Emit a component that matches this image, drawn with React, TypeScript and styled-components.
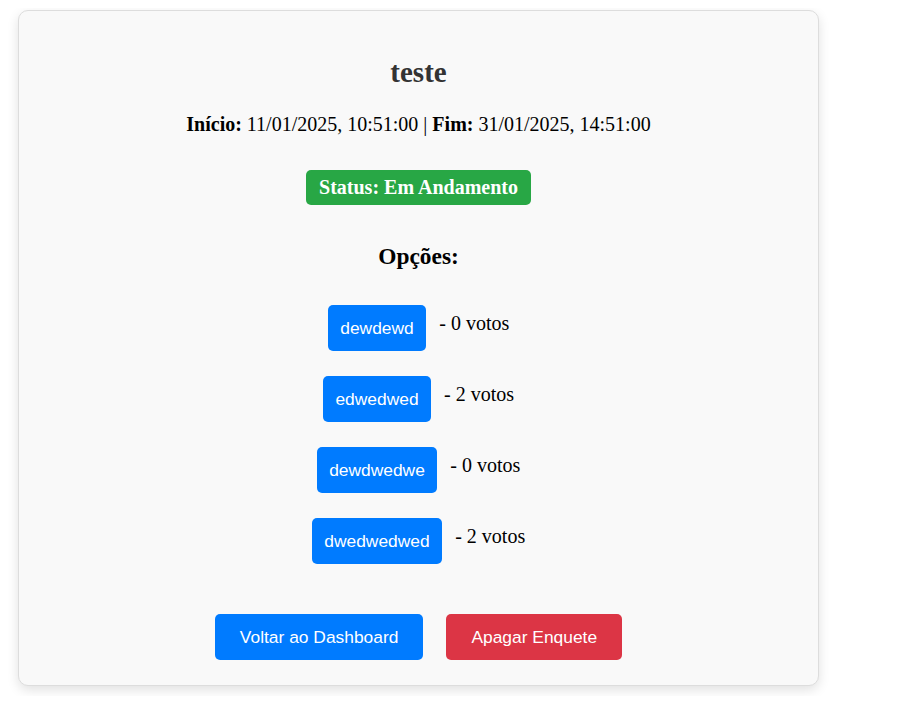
import styled, { createGlobalStyle } from "styled-components";

const GlobalStyle = createGlobalStyle`
  body {
    margin: 8px;
    background: #ffffff;
    font-family: "Liberation Serif", "Times New Roman", serif;
    color: #000;
  }
`;

const Card = styled.div`
  box-sizing: border-box;
  width: 801px;
  margin: 2px 10px 10px;
  padding: 25px 25px 25px;
  background: #f9f9f9;
  border: 1px solid #ddd;
  border-radius: 10px;
  box-shadow: 0 4px 12px rgba(0, 0, 0, 0.12);
  display: flex;
  flex-direction: column;
  align-items: center;
`;

const Title = styled.h2`
  margin: 20px 0 0;
  font-size: 29px;
  line-height: 33px;
  font-weight: bold;
  color: #333;
`;

const Dates = styled.p`
  margin: 24px 0 0;
  font-size: 20px;
  line-height: 23px;
`;

const Status = styled.div`
  margin-top: 34px;
  padding: 6px 13px;
  background: #28a745;
  color: #fff;
  font-size: 20px;
  line-height: 23px;
  font-weight: bold;
  border-radius: 5px;
`;

const Heading = styled.h3`
  margin: 38px 0 0;
  font-size: 23.4px;
  line-height: 27px;
  font-weight: bold;
`;

const OptionList = styled.ul`
  list-style: none;
  margin: 35px 0 0;
  padding: 0;
  display: flex;
  flex-direction: column;
  align-items: center;
  gap: 25px;
`;

const OptionRow = styled.li`
  display: flex;
  align-items: center;
`;

const Button = styled.button<{ $color: string; $wide?: boolean }>`
  border: none;
  border-radius: 5px;
  background: ${(p) => p.$color};
  color: #fff;
  font-family: "Liberation Sans", Arial, sans-serif;
  font-size: 17.4px;
  line-height: 20px;
  padding: ${(p) => (p.$wide ? "13px 25px" : "13px 12.5px")};
  cursor: pointer;
`;

const Votes = styled.span`
  margin-left: 13px;
  margin-bottom: 9px;
  font-size: 20px;
  line-height: 23px;
`;

const Actions = styled.div`
  margin-top: 50px;
  display: flex;
  gap: 23px;
`;

const options = [
  { name: "dewdewd", votes: 0 },
  { name: "edwedwed", votes: 2 },
  { name: "dewdwedwe", votes: 0 },
  { name: "dwedwedwed", votes: 2 },
];

export default function App() {
  return (
    <>
      <GlobalStyle />
      <Card>
        <Title>teste</Title>
        <Dates>
          <strong>Início:</strong> 11/01/2025, 10:51:00 | <strong>Fim:</strong>{" "}
          31/01/2025, 14:51:00
        </Dates>
        <Status>Status: Em Andamento</Status>
        <Heading>Opções:</Heading>
        <OptionList>
          {options.map((o) => (
            <OptionRow key={o.name}>
              <Button $color="#007bff">{o.name}</Button>
              <Votes>- {o.votes} votos</Votes>
            </OptionRow>
          ))}
        </OptionList>
        <Actions>
          <Button $color="#007bff" $wide>
            Voltar ao Dashboard
          </Button>
          <Button $color="#dc3545" $wide>
            Apagar Enquete
          </Button>
        </Actions>
      </Card>
    </>
  );
}
